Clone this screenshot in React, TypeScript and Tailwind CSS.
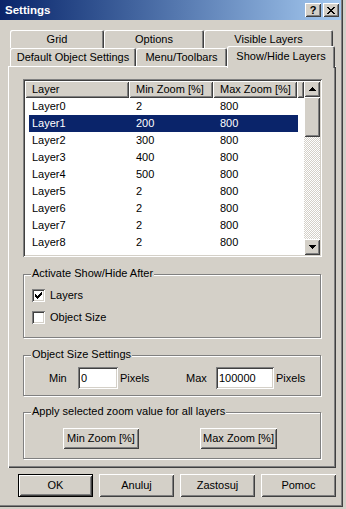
import React from 'react';

const RAISED =
  'shadow-[inset_1px_1px_0_#ffffff,inset_-1px_-1px_0_#404040,inset_2px_2px_0_#d4d0c8,inset_-2px_-2px_0_#808080]';
const SUNKEN =
  'shadow-[inset_1px_1px_0_#808080,inset_-1px_-1px_0_#ffffff,inset_2px_2px_0_#404040,inset_-2px_-2px_0_#d4d0c8]';
const TAB = 'shadow-[inset_1px_1px_0_#ffffff,inset_-1px_0_0_#404040,inset_-2px_0_0_#808080]';
const ETCHED = 'border border-[#808080] shadow-[inset_1px_1px_0_#ffffff,1px_1px_0_#ffffff]';

const layers = [
  { name: 'Layer0', min: '2', max: '800' },
  { name: 'Layer1', min: '200', max: '800', selected: true },
  { name: 'Layer2', min: '300', max: '800' },
  { name: 'Layer3', min: '400', max: '800' },
  { name: 'Layer4', min: '500', max: '800' },
  { name: 'Layer5', min: '2', max: '800' },
  { name: 'Layer6', min: '2', max: '800' },
  { name: 'Layer7', min: '2', max: '800' },
  { name: 'Layer8', min: '2', max: '800' },
];

const CloseGlyph = () => (
  <svg width="8" height="7" viewBox="0 0 8 7" shapeRendering="crispEdges">
    <path
      d="M0 0h2v1H0zM6 0h2v1H6zM1 1h2v1H1zM5 1h2v1H5zM2 2h4v1H2zM3 3h2v1H3zM2 4h4v1H2zM1 5h2v1H1zM5 5h2v1H5zM0 6h2v1H0zM6 6h2v1H6z"
      fill="#000"
    />
  </svg>
);

const CheckGlyph = () => (
  <svg width="7" height="7" viewBox="0 0 7 7" shapeRendering="crispEdges">
    <path d="M6 0h1v3H6zM5 1h1v3H5zM4 2h1v3H4zM0 2h1v3H0zM1 3h1v3H1zM2 4h1v3H2zM3 3h1v3H3z" fill="#000" />
  </svg>
);

const Arrow = ({ up }: { up?: boolean }) => (
  <svg width="7" height="4" viewBox="0 0 7 4" shapeRendering="crispEdges">
    {up ? (
      <path d="M3 0h1v1H3zM2 1h3v1H2zM1 2h5v1H1zM0 3h7v1H0z" fill="#000" />
    ) : (
      <path d="M0 0h7v1H0zM1 1h5v1H1zM2 2h3v1H2zM3 3h1v1H3z" fill="#000" />
    )}
  </svg>
);

const Checkbox = ({ checked, label }: { checked?: boolean; label: string }) => (
  <div className="flex items-center h-[13px]">
    <div className={`w-[13px] h-[13px] bg-white flex items-center justify-center ${SUNKEN}`}>
      {checked && <CheckGlyph />}
    </div>
    <span className="ml-[5px] leading-[13px]">{label}</span>
  </div>
);

const Group = ({ title, className, children }: { title: string; className: string; children: React.ReactNode }) => (
  <div className={`relative w-[298px] ${ETCHED} ${className}`}>
    <span className="absolute left-[7px] -top-[8px] px-[1px] bg-[#d4d0c8] leading-[13px]">{title}</span>
    {children}
  </div>
);

const Button = ({ children, className = '' }: { children: React.ReactNode; className?: string }) => (
  <div className={`flex items-center justify-center bg-[#d4d0c8] ${RAISED} ${className}`}>{children}</div>
);

export default function App() {
  return (
    <div
      className="w-[346px] h-[509px] bg-[#d4d0c8] text-[11px] text-black"
      style={{ fontFamily: "'Liberation Sans', Arial, sans-serif" }}
    >
      <div className="w-[343px] h-[507px] flex flex-col shadow-[inset_-1px_-1px_0_#404040,inset_-2px_-2px_0_#808080]">
        {/* Title bar */}
        <div className="w-[341px] h-[20px] flex items-center pl-[5px] pr-[2px] bg-gradient-to-r from-[#0a246a] to-[#a6caf0]">
          <span className="text-white font-bold text-[11.5px] leading-[20px]">Settings</span>
          <div className="ml-auto flex gap-[2px]">
            <Button className="w-[16px] h-[14px]">
              <span className="font-bold text-[11px] leading-[14px]">?</span>
            </Button>
            <Button className="w-[16px] h-[14px]">
              <CloseGlyph />
            </Button>
          </div>
        </div>

        {/* Tabs */}
        <div className="mt-[10px] ml-[8px] w-[328px]">
          <div className="flex pl-[2px] h-[18px]">
            <div className={`w-[94px] h-[18px] flex items-center justify-center rounded-t-[2px] ${TAB}`}>Grid</div>
            <div className={`w-[100px] h-[18px] flex items-center justify-center rounded-t-[2px] ${TAB}`}>Options</div>
            <div className={`w-[129px] h-[18px] flex items-center justify-center rounded-t-[2px] ${TAB}`}>Visible Layers</div>
          </div>
          <div className="flex items-end pl-[2px] h-[18px]">
            <div className={`w-[126px] h-[18px] flex items-center justify-center rounded-t-[2px] bg-[#d4d0c8] ${TAB}`}>
              Default Object Settings
            </div>
            <div className={`w-[91px] h-[18px] flex items-center justify-center rounded-t-[2px] bg-[#d4d0c8] ${TAB}`}>
              Menu/Toolbars
            </div>
            <div
              className={`relative z-10 w-[108px] h-[22px] -mb-[2px] pb-[2px] flex items-center justify-center rounded-t-[2px] bg-[#d4d0c8] ${TAB}`}
            >
              Show/Hide Layers
            </div>
          </div>

          {/* Panel */}
          <div className="h-[402px] pt-[13px] pl-[15px] flex flex-col bg-[#d4d0c8] shadow-[inset_1px_1px_0_#ffffff,inset_-1px_-1px_0_#404040,inset_-2px_-2px_0_#808080]">
            {/* List view */}
            <div className={`w-[299px] h-[178px] p-[2px] bg-white flex ${SUNKEN}`}>
              <div className="w-[279px] flex flex-col">
                <div className="flex h-[17px] leading-[17px]">
                  <div className={`w-[104px] pl-[7px] bg-[#d4d0c8] ${RAISED}`}>Layer</div>
                  <div className={`w-[84px] pl-[7px] bg-[#d4d0c8] ${RAISED}`}>Min Zoom [%]</div>
                  <div className={`w-[84px] pl-[7px] bg-[#d4d0c8] ${RAISED}`}>Max Zoom [%]</div>
                  <div className={`w-[7px] bg-[#d4d0c8] ${RAISED}`} />
                </div>
                {layers.map((l) => (
                  <div
                    key={l.name}
                    className={`ml-[4px] w-[269px] h-[17px] leading-[17px] flex ${
                      l.selected ? 'bg-[#0a246a] text-white' : ''
                    }`}
                  >
                    <div className="w-[100px] pl-[3px]">{l.name}</div>
                    <div className="w-[84px] pl-[7px]">{l.min}</div>
                    <div className="w-[85px] pl-[7px]">{l.max}</div>
                  </div>
                ))}
              </div>
              <div className="w-[16px] flex flex-col">
                <Button className="h-[16px]">
                  <Arrow up />
                </Button>
                <div className={`h-[40px] bg-[#d4d0c8] ${RAISED}`} />
                <div className="flex-1 bg-[image:repeating-conic-gradient(#ffffff_0%_25%,#d4d0c8_0%_50%)] bg-[length:2px_2px]" />
                <Button className="h-[16px]">
                  <Arrow />
                </Button>
              </div>
            </div>

            <Group title="Activate Show/Hide After" className="mt-[17px] h-[64px] pt-[14px] pl-[8px] flex flex-col gap-[9px]">
              <Checkbox checked label="Layers" />
              <Checkbox label="Object Size" />
            </Group>

            <Group title="Object Size Settings" className="mt-[17px] h-[41px] pt-[11px] pl-[25px] flex items-start">
              <span className="w-[29px] leading-[22px]">Min</span>
              <input
                readOnly
                defaultValue="0"
                className={`w-[40px] h-[22px] pl-[3px] bg-white outline-none ${SUNKEN}`}
              />
              <span className="ml-[2px] w-[66px] leading-[22px]">Pixels</span>
              <span className="w-[30px] leading-[22px]">Max</span>
              <input
                readOnly
                defaultValue="100000"
                className={`w-[58px] h-[22px] pl-[3px] bg-white outline-none ${SUNKEN}`}
              />
              <span className="ml-[2px] leading-[22px]">Pixels</span>
            </Group>

            <Group title="Apply selected zoom value for all layers" className="mt-[16px] h-[47px] pt-[15px] pl-[39px] flex items-start">
              <Button className="w-[76px] h-[21px]">Min Zoom [%]</Button>
              <Button className="ml-[61px] w-[77px] h-[21px]">Max Zoom [%]</Button>
            </Group>
          </div>
        </div>

        {/* Dialog buttons */}
        <div className="mt-[6px] ml-[18px] flex gap-[6px]">
          <Button className="w-[75px] h-[23px] border border-black">OK</Button>
          <Button className="w-[75px] h-[23px]">Anuluj</Button>
          <Button className="w-[75px] h-[23px]">Zastosuj</Button>
          <Button className="w-[75px] h-[23px]">Pomoc</Button>
        </div>
      </div>
    </div>
  );
}
